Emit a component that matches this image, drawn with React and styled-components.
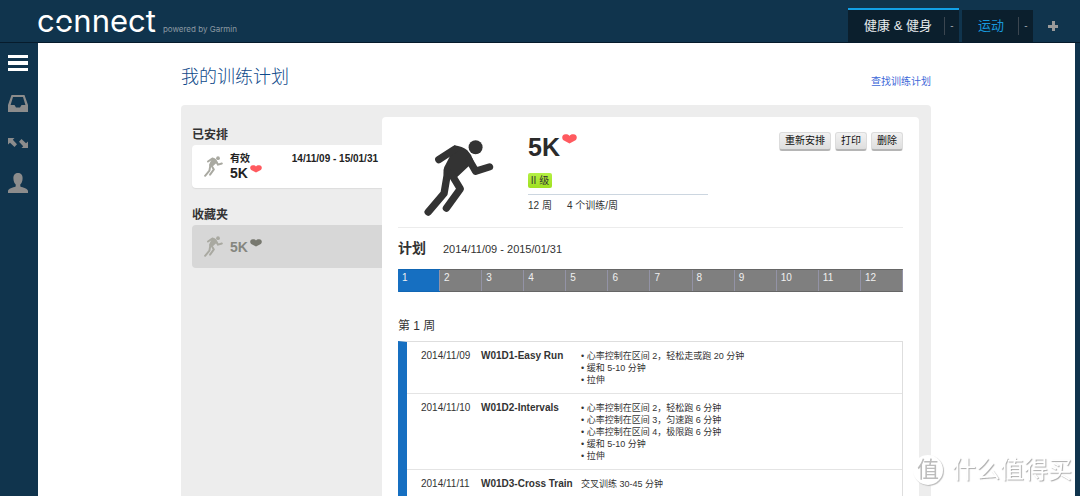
import React, { useState } from "react";
import styled, { createGlobalStyle } from "styled-components";

const sans = `"Liberation Sans", "Noto Sans CJK SC", sans-serif`;

const GlobalStyle = createGlobalStyle`
  * {
    box-sizing: border-box;
  }
  body {
    margin: 0;
    background: #10344d;
    color: #333;
    font-family: ${sans};
    font-size: 10px;
    line-height: 12px;
  }
  h1, h2, h3, p, ul, ol {
    margin: 0;
    padding: 0;
    list-style: none;
  }
  button {
    font-family: inherit;
    cursor: pointer;
  }
  svg {
    display: block;
    flex-shrink: 0;
  }
`;

const Shell = styled.div`
  display: flex;
  flex-direction: column;
  height: 100vh;
  overflow: hidden;
`;

const Header = styled.header`
  display: flex;
  justify-content: space-between;
  padding: 0 10px 0 37px;
  border-bottom: 1px solid #061b2c;
`;

const Brand = styled.a`
  display: flex;
  align-items: baseline;
  gap: 7px;
  padding-top: 3px;
  color: #fff;
  text-decoration: none;
`;

const Logo = styled.span`
  font-family: Inter, sans-serif;
  font-size: 31px;
  line-height: 36px;
`;

const SplitLetter = styled.span`
  position: relative;

  &::after {
    content: "";
    position: absolute;
    left: 0;
    right: 0;
    top: 21px;
    height: 3px;
    background: #10344d;
  }
`;

const Powered = styled.span`
  font-family: Inter, sans-serif;
  font-size: 8px;
  color: #8c99a3;
`;

const Tabs = styled.nav`
  display: flex;
  align-items: flex-end;
  gap: 3px;
  height: 42px;
`;

const Tab = styled.div`
  display: flex;
  align-items: center;
  height: ${(props) => (props.$active ? "34px" : "32px")};
  padding-left: 16px;
  background: #0b1f2d;
  border-top: ${(props) => (props.$active ? "2px solid #12a0e6" : "none")};
`;

const TabLink = styled.a`
  padding-right: ${(props) => (props.$active ? "12px" : "14px")};
  font-size: 13px;
  line-height: 20px;
  color: ${(props) => (props.$active ? "#e8ecef" : "#1898dc")};
  text-decoration: none;
`;

const TabMenu = styled.button`
  width: 15px;
  height: 18px;
  padding: 0;
  border: 0;
  border-left: 1px solid #3b4650;
  background: none;
  color: #9aa3aa;
  font-size: 10px;
  line-height: 18px;
`;

const AddTab = styled.button`
  display: flex;
  align-items: center;
  justify-content: center;
  width: 34px;
  height: 32px;
  padding: 0;
  border: 0;
  background: none;
`;

const Body = styled.div`
  display: flex;
  flex: 1;
  min-height: 0;
  padding-right: 5px;
`;

const Sidebar = styled.nav`
  display: flex;
  flex-direction: column;
  align-items: center;
  width: 38px;
  padding: 0 2px 0 0;
`;

const SideButton = styled.button`
  display: flex;
  align-items: center;
  justify-content: center;
  width: 36px;
  height: 40px;
  padding: 0;
  border: 0;
  background: none;
`;

const Main = styled.main`
  flex: 1;
  padding-right: 1px;
  overflow-y: auto;
  scrollbar-width: none;
  background: #fff;
`;

const Page = styled.div`
  max-width: 750px;
  margin: 0 auto;
  padding-top: 22px;
`;

const PageTop = styled.div`
  display: flex;
  align-items: flex-end;
  justify-content: space-between;
  margin-bottom: 16px;
`;

const PageTitle = styled.h1`
  font-size: 18px;
  line-height: 24px;
  font-weight: 300;
  color: #0f4a8a;
`;

const FindLink = styled.a`
  line-height: 14px;
  color: #3d68d8;
  text-decoration: none;
`;

const Panel = styled.div`
  display: flex;
  padding: 12px 12px 0 11px;
  background: #ededed;
  border-radius: 4px 4px 0 0;
`;

const PlanList = styled.aside`
  width: 190px;
  padding-top: 10px;
`;

const ListGroup = styled.section`
  margin-bottom: 19px;
`;

const ListTitle = styled.h2`
  margin-bottom: 2px;
  font-size: 12px;
  line-height: 16px;
`;

const PlanItem = styled.a`
  display: flex;
  align-items: center;
  gap: 7px;
  height: 43px;
  padding: 0 4px 0 12px;
  border-radius: 4px 0 0 4px;
  background: ${(props) => (props.$active ? "#fff" : "#d7d7d7")};
  box-shadow: ${(props) => (props.$active ? "0 1px 1px #dcdcdc" : "none")};
  color: ${(props) => (props.$active ? "#222" : "#85867f")};
  font-weight: bold;
  text-decoration: none;
`;

const PlanText = styled.div`
  flex: 1;
`;

const PlanStatus = styled.div`
  display: flex;
  justify-content: space-between;
`;

const PlanName = styled.div`
  display: flex;
  align-items: flex-start;
  gap: 2px;
  font-size: 14px;
  line-height: 16px;
`;

const Card = styled.section`
  flex: 1;
  padding: 0 16px;
  background: #fff;
  border-radius: 4px 4px 0 0;
`;

const Summary = styled.div`
  display: flex;
  align-items: flex-start;
  padding: 15px 0 11px 26px;
  border-bottom: 1px solid #ececec;
`;

const RunnerBox = styled.div`
  width: 104px;
  padding-top: 8px;
`;

const SummaryText = styled.div`
  width: 180px;
`;

const PlanTitle = styled.h2`
  display: flex;
  align-items: flex-start;
  gap: 2px;
  margin-bottom: 11px;
  font-size: 25px;
  line-height: 30px;
  color: #2b2b2b;

  svg {
    margin-top: 2px;
  }
`;

const Level = styled.span`
  display: block;
  width: 24px;
  height: 15px;
  border-radius: 2px;
  background: linear-gradient(#b4f045, #9fe01f);
  line-height: 15px;
  text-align: center;
`;

const Facts = styled.p`
  display: flex;
  gap: 15px;
  margin-top: 6px;
  padding-top: 3px;
  border-top: 1px solid #ccd6e0;
  line-height: 16px;
`;

const Actions = styled.div`
  display: flex;
  gap: 4px;
  margin-left: auto;
`;

const ActionButton = styled.button`
  height: 19px;
  padding: 0 5px;
  border: 1px solid #dcdcdc;
  border-bottom: 2px solid #b5b5b5;
  border-radius: 3px;
  background: linear-gradient(#f2f2f2, #dedede);
  color: #111;
  font-size: 10px;
  line-height: 16px;
  white-space: nowrap;
`;

const ScheduleHead = styled.div`
  display: flex;
  align-items: baseline;
  gap: 17px;
  padding: 8px 0;
  font-size: 11px;
  line-height: 24px;
`;

const ScheduleTitle = styled.h3`
  font-size: 14px;
  line-height: 24px;
`;

const Weeks = styled.ol`
  display: grid;
  grid-template-columns: repeat(12, 1fr);
  border-radius: 1px;
  overflow: hidden;
`;

const WeekButton = styled.button`
  display: flex;
  width: 100%;
  height: 23px;
  padding: 1px 4px;
  border: 1px solid ${(props) => (props.$active ? "#1166b4" : "#666")};
  border-width: 1px 0;
  box-shadow: inset -1px 0 #9393a6;
  background: ${(props) => (props.$active ? "#166fc1" : "#7f7f7f")};
  color: #f0f0f0;
  font-size: 10px;
  line-height: 14px;
`;

const WeekTitle = styled.h3`
  margin: 26px 0 7px;
  font-size: 12px;
  line-height: 16px;
  font-weight: normal;
`;

const Workouts = styled.table`
  width: 100%;
  border-spacing: 0;
  border: 1px solid #dedede;
  border-left: 9px solid #166fc1;
  border-bottom: 0;
  table-layout: fixed;
`;

const DayCell = styled.td`
  width: ${(props) => props.$width || "auto"};
  padding: 8px 0 7px ${(props) => props.$indent || "0"};
  border-bottom: 1px solid #e4e4e4;
  vertical-align: top;
`;

const NameCell = styled.th`
  width: 100px;
  padding: 8px 0 7px;
  border-bottom: 1px solid #e4e4e4;
  font-weight: bold;
  text-align: left;
  vertical-align: top;
  white-space: nowrap;
`;

const Steps = styled.ul`
  font-size: 9px;
  line-height: 12px;
`;

const Watermark = styled.div`
  position: fixed;
  right: 8px;
  bottom: 10px;
  display: flex;
  align-items: center;
  gap: 9px;
  color: #fff;
  font-size: 24px;
  line-height: 32px;
  text-shadow: 1px 1px 1px #aaa;
  pointer-events: none;
`;

const Seal = styled.span`
  width: 30px;
  height: 30px;
  border-radius: 50%;
  background: #fff;
  box-shadow: 1px 1px 1px #bbb;
  color: #bcbcbc;
  font-size: 22px;
  line-height: 29px;
  text-align: center;
  text-shadow: none;
`;

const Runner = ({ width, height, color }) => (
  <svg width={width} height={height} viewBox="132 119 210 229" aria-hidden="true">
    <circle cx="287" cy="141" r="21" fill={color} />
    <path
      d="M222 135Q248 138 262 150Q274 162 279 178L286 200L266 198L230 232L192 228Q187 206 196 194L213 161Z"
      fill={color}
    />
    <g
      fill="none"
      stroke={color}
      strokeWidth="22"
      strokeLinecap="round"
      strokeLinejoin="round"
    >
      <path d="M176 178L224 147" />
      <path d="M268 180L287 213L329 200" />
      <path d="M203 215L192 280L144 336" />
      <path d="M214 222L241 266L199 324" />
    </g>
  </svg>
);

const Heart = ({ width, height, color }) => (
  <svg width={width} height={height} viewBox="0 0 15 10" aria-hidden="true">
    <path
      d="M7.5 9.500L1.500 6.200C-.6 4.600-.2.500 3.500.300C5.500.200 6.900.800 7.500 2C8.100.800 9.500.200 11.500.300C15.200.500 15.600 4.600 13.500 6.200Z"
      fill={color}
    />
  </svg>
);

const sideItems = [
  {
    label: "菜单",
    icon: (
      <svg width="20" height="16" viewBox="0 0 20 16" fill="#fff">
        <path d="M0 0h20v3H0zM0 6h20v4H0zM0 13h20v3H0z" />
      </svg>
    ),
  },
  {
    label: "收件箱",
    icon: (
      <svg width="20" height="17" viewBox="0 0 20 17" fill="#8c8c8c">
        <path
          fillRule="evenodd"
          d="M3.500 0H16.500L20 10V17H0V10ZM5 2L2.600 10H6.500L8 12.500H12L13.500 10H17.400L15 2Z"
        />
      </svg>
    ),
  },
  {
    label: "同步",
    icon: (
      <svg width="20" height="10" viewBox="0 0 20 10" fill="#8c8c8c">
        <path d="M0 0H6.500L4.800 1.800L9 6.200L6.500 9L2 4.700L0 6.500Z" />
        <path d="M20 10H13.500L15.200 8.200L11 3.800L13.500 1L18 5.300L20 3.500Z" />
      </svg>
    ),
  },
  {
    label: "个人资料",
    icon: (
      <svg width="20" height="20" viewBox="0 0 20 20" fill="#8c8c8c">
        <path d="M10 0C13.500 0 14.800 2.500 14.600 5.500C14.500 8.500 13.500 10.500 12.300 11.500V13.500C15 14.500 20 15.500 20 18V20H0V18C0 15.500 5 14.500 7.700 13.500V11.500C6.500 10.500 5.500 8.500 5.400 5.500C5.200 2.500 6.500 0 10 0Z" />
      </svg>
    ),
  },
];

const workouts = [
  {
    date: "2014/11/09",
    name: "W01D1-Easy Run",
    steps: [
      "• 心率控制在区间 2，轻松走或跑 20 分钟",
      "• 缓和 5-10 分钟",
      "• 拉伸",
    ],
  },
  {
    date: "2014/11/10",
    name: "W01D2-Intervals",
    steps: [
      "• 心率控制在区间 2，轻松跑 6 分钟",
      "• 心率控制在区间 3，匀速跑 6 分钟",
      "• 心率控制在区间 4，极限跑 6 分钟",
      "• 缓和 5-10 分钟",
      "• 拉伸",
    ],
  },
  {
    date: "2014/11/11",
    name: "W01D3-Cross Train",
    steps: ["交叉训练 30-45 分钟"],
  },
];

const weeks = Array.from({ length: 12 }, (_, i) => i + 1);

const App = () => {
  const [week, setWeek] = useState(1);

  return (
    <Shell>
      <GlobalStyle />
      <Header>
        <Brand href="#">
          <Logo>
            c<SplitLetter>o</SplitLetter>nnect
          </Logo>
          <Powered>powered by Garmin</Powered>
        </Brand>
        <Tabs>
          <Tab $active>
            <TabLink href="#" $active>
              健康 &amp; 健身
            </TabLink>
            <TabMenu aria-label="健康 & 健身菜单">-</TabMenu>
          </Tab>
          <Tab>
            <TabLink href="#">运动</TabLink>
            <TabMenu aria-label="运动菜单">-</TabMenu>
          </Tab>
          <AddTab aria-label="添加">
            <svg width="10" height="10" viewBox="0 0 10 10" fill="#9a9a9a">
              <path d="M4 0h3v4h3v3H7v3H4V7H0V4h4z" />
            </svg>
          </AddTab>
        </Tabs>
      </Header>
      <Body>
        <Sidebar>
          {sideItems.map((item) => (
            <SideButton key={item.label} aria-label={item.label}>
              {item.icon}
            </SideButton>
          ))}
        </Sidebar>
        <Main>
          <Page>
            <PageTop>
              <PageTitle>我的训练计划</PageTitle>
              <FindLink href="#">查找训练计划</FindLink>
            </PageTop>
            <Panel>
              <PlanList>
                <ListGroup>
                  <ListTitle>已安排</ListTitle>
                  <PlanItem href="#" $active>
                    <Runner width={19} height={21} color="#a9a9a1" />
                    <PlanText>
                      <PlanStatus>
                        <span>有效</span>
                        <span>14/11/09 - 15/01/31</span>
                      </PlanStatus>
                      <PlanName>
                        5K
                        <Heart width={12} height={8} color="#ff5a5f" />
                      </PlanName>
                    </PlanText>
                  </PlanItem>
                </ListGroup>
                <ListGroup>
                  <ListTitle>收藏夹</ListTitle>
                  <PlanItem href="#">
                    <Runner width={19} height={21} color="#a9a9a1" />
                    <PlanText>
                      <PlanName>
                        5K
                        <Heart width={12} height={8} color="#77786f" />
                      </PlanName>
                    </PlanText>
                  </PlanItem>
                </ListGroup>
              </PlanList>
              <Card>
                <Summary>
                  <RunnerBox>
                    <Runner width={70} height={76} color="#333" />
                  </RunnerBox>
                  <SummaryText>
                    <PlanTitle>
                      5K
                      <Heart width={15} height={10} color="#ff5a5f" />
                    </PlanTitle>
                    <Level>II 级</Level>
                    <Facts>
                      <span>12 周</span>
                      <span>4 个训练/周</span>
                    </Facts>
                  </SummaryText>
                  <Actions>
                    <ActionButton>重新安排</ActionButton>
                    <ActionButton>打印</ActionButton>
                    <ActionButton>删除</ActionButton>
                  </Actions>
                </Summary>
                <ScheduleHead>
                  <ScheduleTitle>计划</ScheduleTitle>
                  <span>2014/11/09 - 2015/01/31</span>
                </ScheduleHead>
                <Weeks>
                  {weeks.map((n) => (
                    <li key={n}>
                      <WeekButton
                        $active={n === week}
                        onClick={() => setWeek(n)}
                      >
                        {n}
                      </WeekButton>
                    </li>
                  ))}
                </Weeks>
                <WeekTitle>第 {week} 周</WeekTitle>
                <Workouts>
                  <tbody>
                    {workouts.map((workout) => (
                      <tr key={workout.date}>
                        <DayCell $width="74px" $indent="14px">
                          {workout.date}
                        </DayCell>
                        <NameCell scope="row">{workout.name}</NameCell>
                        <DayCell>
                          <Steps>
                            {workout.steps.map((step) => (
                              <li key={step}>{step}</li>
                            ))}
                          </Steps>
                        </DayCell>
                      </tr>
                    ))}
                  </tbody>
                </Workouts>
              </Card>
            </Panel>
          </Page>
        </Main>
      </Body>
      <Watermark>
        <Seal>值</Seal>
        什么值得买
      </Watermark>
    </Shell>
  );
};

export default App;
